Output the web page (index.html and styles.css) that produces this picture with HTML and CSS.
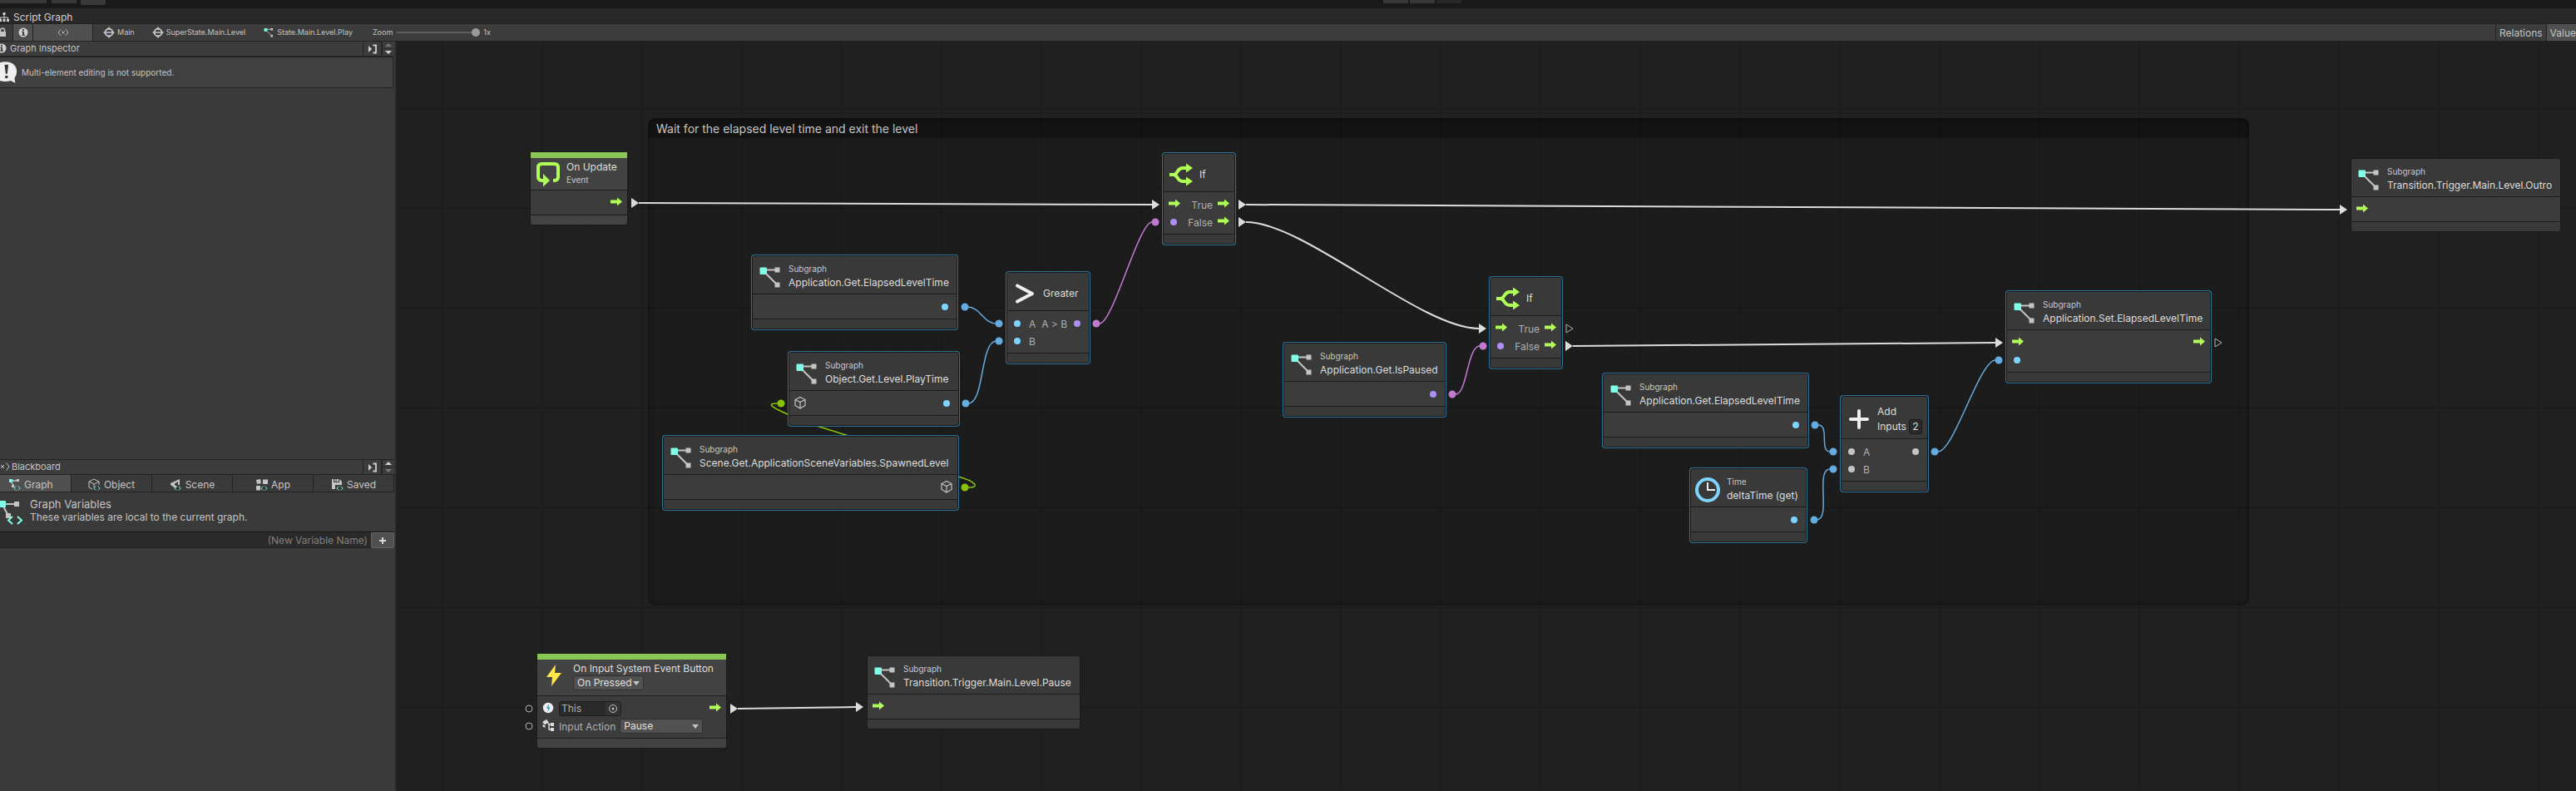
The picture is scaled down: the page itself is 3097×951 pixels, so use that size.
FILE: index.html
```html
<!DOCTYPE html>
<html lang="en">
<head>
<meta charset="utf-8">
<title>Script Graph</title>
<link rel="stylesheet" href="styles.css">
</head>
<body>
<svg class="sprite" aria-hidden="true">
  <symbol id="i-subgraph" viewBox="0 0 32 32">
    <path d="M8 7.500H24M8 9L24 25" stroke="#c4c4c4" stroke-width="2" fill="none"/>
    <rect x="21.500" y="4.500" width="6" height="6" fill="#c4c4c4"/><rect x="21.500" y="22.500" width="6" height="6" fill="#c4c4c4"/>
    <rect x="3.500" y="4.500" width="8.500" height="8.500" rx="1" fill="#80ffe6"/>
  </symbol>
  <symbol id="i-loop" viewBox="0 0 32 32">
    <path d="M11 24H8.500Q4 24 4 19.500V8.500Q4 4 8.500 4H23.500Q28 4 28 8.500V19.500Q28 24 23.500 24H22" stroke="#b0ff57" stroke-width="4" fill="none"/>
    <path d="M10 16L18 24L10 31.500Z" fill="#b0ff57"/>
  </symbol>
  <symbol id="i-branch" viewBox="0 0 32 32">
    <path d="M2 16H8M7 16C12 16 11 8 18 8H23M7 16C12 16 11 24 18 24H23" stroke="#b0ff57" stroke-width="4" fill="none"/>
    <path d="M22 2.500L30 8L22 13.500ZM22 18.500L30 24L22 29.500Z" fill="#b0ff57"/>
  </symbol>
  <symbol id="i-greater" viewBox="0 0 32 32"><path d="M7 6.500L25 16L7 25.500" stroke="#eee" stroke-width="4" fill="none" stroke-linejoin="round" stroke-linecap="round"/></symbol>
  <symbol id="i-plus" viewBox="0 0 32 32"><path d="M16 6V26M6 16H26" stroke="#eee" stroke-width="4" stroke-linecap="round"/></symbol>
  <symbol id="i-clock" viewBox="0 0 32 32"><circle cx="15" cy="16" r="13" stroke="#7fd4ff" stroke-width="4" fill="none"/><path d="M15 7V16H24" stroke="#eee" stroke-width="2" fill="none"/></symbol>
  <symbol id="i-bolt" viewBox="0 0 32 32"><path d="M17 2L6 17H13L12 28L24 12H16Z" fill="#ffe74c"/></symbol>
  <symbol id="i-arrow" viewBox="0 0 16 16"><path d="M1 4.500H9V1.500L15 6.500L9 11.500V8.500H1Z" fill="#b0ff57"/></symbol>
  <symbol id="i-dot" viewBox="0 0 16 16"><circle cx="7" cy="8" r="4" fill="currentColor"/></symbol>
  <symbol id="i-cube" viewBox="0 0 16 16"><path d="M8 .5L14 3.500V10.500L8 14L2 10.500V3.500ZM2 3.500L8 6.500L14 3.500M8 6.500V14" stroke="#c4c4c4" stroke-width="1.200" fill="none"/></symbol>
  <symbol id="i-self" viewBox="0 0 16 16"><circle cx="8" cy="7" r="6.200" fill="#f0f0f0"/><path d="M9 2L6 7.500H8L7.500 12L10.500 6.500H8.500Z" fill="#1a9ad6"/></symbol>
  <symbol id="i-action" viewBox="0 0 16 16"><path d="M1 3L6 0L8.500 3L4 6.500Z" fill="#ddd"/><path d="M7 3L9 6H13M9 6V12H13" stroke="#ddd" stroke-width="1.500" fill="none"/><path d="M11 4h4v4h-4zM11 10h4v4h-4z" fill="#ddd"/><path d="M2 6l3 2-1 2-3-2z" fill="#ddd"/></symbol>
  <symbol id="i-state" viewBox="0 0 16 16"><rect x="3.200" y="3.200" width="9.600" height="9.600" rx="4" fill="none" stroke="#c4c4c4" stroke-width="2"/><path d="M8 0L11 4H5ZM8 16L5 12H11ZM0 8L4 5V11ZM16 8L12 11V5ZM4.500 7.200H11.500V8.800H4.500Z" fill="#c4c4c4"/></symbol>
  <symbol id="i-info" viewBox="0 0 12 12"><circle cx="6" cy="6" r="5.500" fill="#d0d0d0"/><path d="M5 2h2v1.700H5zM4.300 4.800H7V8.500H8V9.700H4.200V8.500H5.200V6H4.300Z" fill="#3a3a3a"/></symbol>
  <symbol id="i-var" viewBox="0 0 16 12"><path d="M4.500 1.500L1 6L4.500 10.500M11.500 1.500L15 6L11.500 10.500M6 4L10 8M10 4L6 8" stroke="#c4c4c4" stroke-width="1" fill="none"/></symbol>
  <symbol id="i-lock" viewBox="0 0 12 12"><path d="M3.500 5.500V3.500Q3.500 1 6 1Q8.500 1 8.500 3.500V5.500" stroke="#c4c4c4" stroke-width="1.500" fill="none"/><rect x="2" y="5" width="8" height="6" fill="#c4c4c4"/></symbol>
  <symbol id="i-tree" viewBox="0 0 14 12"><path d="M7 3V8M2.500 9V6H11.500V9" stroke="#d2d2d2" fill="none"/><path d="M5.500 0h3v3h-3zM1 8h3v3H1zM5.500 8h3v3h-3zM10 8h3v3h-3z" fill="#d2d2d2"/></symbol>
  <symbol id="i-dock" viewBox="0 0 12 12"><path d="M1 2L5 6L1 10Z" fill="#d0d0d0"/><path d="M6.500 1.500H10V10.500H6.500" stroke="#d0d0d0" stroke-width="1.800" fill="none"/></symbol>
  <symbol id="i-brackets" viewBox="0 0 12 8"><path d="M4.500 .8L1 4L4.500 7.200M7.500 .8L11 4L7.500 7.200" stroke="#6eeed2" stroke-width="1.300" fill="none"/></symbol>
  <symbol id="i-tgraph" viewBox="0 0 16 16"><path d="M3 3H12M3 3L7 10" stroke="#c4c4c4" stroke-width="1.300"/><rect x="1" y="1" width="4" height="4" fill="#80ffe6"/><rect x="10" y="1" width="3" height="3" fill="#c4c4c4"/><rect x="4" y="8" width="3" height="3" fill="#c4c4c4"/><use href="#i-brackets" x="6" y="9" width="9" height="6"/></symbol>
  <symbol id="i-tobject" viewBox="0 0 16 16"><path d="M7 1L13 4V8M5 13L1 11V4L7 1M1 4L7 7L13 4M7 7V11" stroke="#c4c4c4" fill="none"/><use href="#i-brackets" x="6" y="9" width="9" height="6"/></symbol>
  <symbol id="i-tscene" viewBox="0 0 16 16"><path d="M12 1V8H10V4L6 6.500V8L9 10L7 12L1 8V6Z" fill="#c4c4c4"/><use href="#i-brackets" x="5" y="9" width="9" height="6"/></symbol>
  <symbol id="i-tapp" viewBox="0 0 16 16"><path d="M1 2L6 1L7 6L2 7ZM9 1.500h6v5.500H9zM1 9h5v5.500H1z" fill="#c4c4c4"/><use href="#i-brackets" x="6" y="9" width="9" height="6"/></symbol>
  <symbol id="i-tsaved" viewBox="0 0 16 16"><path d="M1 1H3V5H10V1L13 4V8H5V13H1ZM4 1H5.500V4H4ZM6.500 1H9V4H6.500Z" fill="#c4c4c4"/><use href="#i-brackets" x="6" y="9" width="9" height="6"/></symbol>
</svg>

<div class="window">
  <div class="app-bar">
    <span class="stub stub-wide"></span><span class="stub"></span><span class="stub stub-tall"></span>
    <span class="app-gap-a"></span>
    <span class="stub stub-play"></span><span class="stub stub-play"></span><span class="stub stub-play stub-off"></span>
    <span class="app-gap-b"></span>
  </div>
  <div class="tab-bar"><svg class="tree-icon"><use href="#i-tree"/></svg><span>Script Graph</span></div>

  <div class="toolbar">
    <button class="tool tool-lock" aria-label="Lock"><svg class="ic12"><use href="#i-lock"/></svg></button>
    <button class="tool tool-info on" aria-label="Inspector"><svg class="ic12"><use href="#i-info"/></svg></button>
    <button class="tool tool-var on" aria-label="Variables"><svg class="var-icon"><use href="#i-var"/></svg></button>
    <nav class="crumbs">
      <button class="crumb"><svg class="ic14"><use href="#i-state"/></svg>Main</button>
      <button class="crumb"><svg class="ic14"><use href="#i-state"/></svg>SuperState.Main.Level</button>
      <button class="crumb"><svg class="ic14"><use href="#i-subgraph"/></svg>State.Main.Level.Play</button>
    </nav>
    <label class="zoom-label" for="zoom">Zoom</label>
    <input class="zoom" id="zoom" type="range" min="0" max="100" value="100">
    <span class="zoom-value">1x</span>
    <button class="tool tool-text relations">Relations</button>
    <button class="tool tool-text on">Value</button>
  </div>

  <div class="main">
    <aside class="sidebar">
      <section class="panel">
        <header class="panel-head">
          <svg class="ic12 head-info"><use href="#i-info"/></svg><h2>Graph Inspector</h2>
          <button class="dock" aria-label="Dock"><svg class="ic12"><use href="#i-dock"/></svg></button>
          <div class="steps"><button class="step up dim" aria-label="Move up"></button><button class="step down" aria-label="Move down"></button></div>
        </header>
        <div class="help">
          <svg class="help-icon" viewBox="0 0 24 30"><path d="M7 1C17 1 22 7 22 14Q22 19 19 22.500L20 29L14 26Q11 27 7 27C-3 27 -9 21 -9 14C-9 7 -3 1 7 1Z" fill="#efefef"/><path d="M6 5H11L9.500 17H7.500Z" fill="#333"/><circle cx="8.500" cy="21" r="2" fill="#333"/></svg>
          <p>Multi-element editing is not supported.</p>
        </div>
      </section>
      <section class="panel blackboard">
        <header class="panel-head">
          <svg class="head-var" viewBox="4 0 12 12"><path d="M11.500 1.500L15 6L11.500 10.500M5 4L9 8M9 4L5 8" stroke="#c4c4c4" fill="none"/></svg><h2>Blackboard</h2>
          <button class="dock" aria-label="Dock"><svg class="ic12"><use href="#i-dock"/></svg></button>
          <div class="steps"><button class="step up" aria-label="Move up"></button><button class="step down dim" aria-label="Move down"></button></div>
        </header>
        <div class="tabs">
          <button class="tab on"><svg class="ic16"><use href="#i-tgraph"/></svg>Graph</button>
          <button class="tab"><svg class="ic16"><use href="#i-tobject"/></svg>Object</button>
          <button class="tab"><svg class="ic16"><use href="#i-tscene"/></svg>Scene</button>
          <button class="tab"><svg class="ic16"><use href="#i-tapp"/></svg>App</button>
          <button class="tab"><svg class="ic16"><use href="#i-tsaved"/></svg>Saved</button>
        </div>
        <div class="about">
          <svg class="about-icon" viewBox="0 0 30 30"><path d="M3 5H20M3 6L10 19" stroke="#c4c4c4" stroke-width="2"/><rect x="-1" y="1" width="8" height="8" rx="1" fill="#80ffe6"/><rect x="17" y="2" width="6" height="6" fill="#c4c4c4"/><rect x="7" y="16" width="6" height="6" fill="#c4c4c4"/><path d="M15 20L10 24.500L15 29M21 20L26 24.500L21 29" stroke="#80ffe6" stroke-width="2" fill="none"/></svg>
          <div><h3>Graph Variables</h3><p>These variables are local to the current graph.</p></div>
        </div>
        <div class="new-var">
          <input type="text" placeholder="(New Variable Name)" aria-label="New variable name">
          <button aria-label="Add variable"><svg viewBox="0 0 10 10"><path d="M5 1V9M1 5H9" stroke="#d8d8d8" stroke-width="2"/></svg></button>
        </div>
      </section>
    </aside>

    <main class="canvas">
      <div class="group"><div class="group-title">Wait for the elapsed level time and exit the level</div></div>

      <svg class="wires" aria-hidden="true">
        <defs>
          <path id="tri" d="M0 -6L9 0L0 6Z"/>
        </defs>
        <g transform="translate(-476 -50)">
          <g class="flow">
            <path d="M768 244L1385 246"/><path d="M1498 246L2813 252"/><path d="M1498 267C1568 267 1708 395 1778 395"/>
            <path d="M1891 416L2399 412"/><path d="M887 852L1029 850"/>
          </g>
          <g class="value bool"><path d="M1318 389H1322C1338 389 1369 267 1385 267H1389"/><path d="M1746 474H1750C1764 474 1764 416 1779 416H1783"/></g>
          <g class="value num">
            <path d="M1160 369H1163C1179 369 1182 389 1198 389H1201"/><path d="M1161 485H1164C1184 485 1178 410 1198 410H1201"/>
            <path d="M2182 511H2186C2200 511 2187 543 2200 543H2204"/><path d="M2181 625H2184C2202 625 2182 564 2200 564H2204"/>
            <path d="M2326 543H2330C2349 543 2380 433 2399 433H2403"/>
          </g>
          <path class="value obj" d="M1160 586H1166C1177 586 1174 579 1152 573L1017 523L985 513L947 498C926 489 922 485 934 485H939"/>
          <g class="tips">
            <use href="#tri" x="759" y="244"/><use href="#tri" x="1385" y="246"/><use href="#tri" x="1489" y="246"/><use href="#tri" x="2813" y="252"/>
            <use href="#tri" x="1489" y="267"/><use href="#tri" x="1778" y="395"/><use href="#tri" x="1882" y="416"/><use href="#tri" x="2399" y="412"/>
            <use href="#tri" x="878" y="852"/><use href="#tri" x="1029" y="850"/>
          </g>
          <g class="open"><path d="M1883 390L1891 395L1883 400Z"/><path d="M2663 407L2671 412L2663 417Z"/><circle cx="636" cy="852" r="4"/><circle cx="636" cy="873" r="4"/></g>
          <g class="dots-bool"><circle cx="1318" cy="389" r="4.500"/><circle cx="1389" cy="267" r="4.500"/><circle cx="1746" cy="474" r="4.500"/><circle cx="1783" cy="416" r="4.500"/></g>
          <g class="dots-num"><circle cx="1160" cy="369" r="4.500"/><circle cx="1201" cy="389" r="4.500"/><circle cx="1161" cy="485" r="4.500"/><circle cx="1201" cy="410" r="4.500"/><circle cx="2182" cy="511" r="4.500"/><circle cx="2204" cy="543" r="4.500"/><circle cx="2181" cy="625" r="4.500"/><circle cx="2204" cy="564" r="4.500"/><circle cx="2326" cy="543" r="4.500"/><circle cx="2403" cy="433" r="4.500"/></g>
          <g class="dots-obj"><circle cx="1160" cy="586" r="4.500"/><circle cx="939" cy="485" r="4.500"/></g>
        </g>
      </svg>

      <article class="node event n-update">
        <header><svg class="ic32"><use href="#i-loop"/></svg><div class="titles"><h4>On Update</h4><small>Event</small></div></header>
        <div class="ports"><div class="port"><svg class="ic16 out"><use href="#i-arrow"/></svg></div></div><footer></footer>
      </article>

      <article class="node selected n-elapsed-a">
        <header><svg class="ic32"><use href="#i-subgraph"/></svg><div class="titles"><small>Subgraph</small><h4>Application.Get.ElapsedLevelTime</h4></div></header>
        <div class="ports"><div class="port"><svg class="ic16 out c-num"><use href="#i-dot"/></svg></div></div><footer></footer>
      </article>

      <article class="node selected n-playtime">
        <header><svg class="ic32"><use href="#i-subgraph"/></svg><div class="titles"><small>Subgraph</small><h4>Object.Get.Level.PlayTime</h4></div></header>
        <div class="ports"><div class="port"><svg class="ic16"><use href="#i-cube"/></svg><svg class="ic16 out c-num"><use href="#i-dot"/></svg></div></div><footer></footer>
      </article>

      <article class="node selected n-spawned">
        <header><svg class="ic32"><use href="#i-subgraph"/></svg><div class="titles"><small>Subgraph</small><h4>Scene.Get.ApplicationSceneVariables.SpawnedLevel</h4></div></header>
        <div class="ports"><div class="port"><svg class="ic16 out"><use href="#i-cube"/></svg></div></div><footer></footer>
      </article>

      <article class="node selected n-greater">
        <header><svg class="ic32"><use href="#i-greater"/></svg><div class="titles"><h4>Greater</h4></div></header>
        <div class="ports">
          <div class="port"><svg class="ic16 c-num"><use href="#i-dot"/></svg><span class="name">A</span><span class="name out">A &gt; B</span><svg class="ic16 c-bool"><use href="#i-dot"/></svg></div>
          <div class="port"><svg class="ic16 c-num"><use href="#i-dot"/></svg><span class="name">B</span></div>
        </div><footer></footer>
      </article>

      <article class="node selected n-if-a">
        <header><svg class="ic32"><use href="#i-branch"/></svg><div class="titles"><h4>If</h4></div></header>
        <div class="ports">
          <div class="port"><svg class="ic16"><use href="#i-arrow"/></svg><span class="name out">True</span><svg class="ic16"><use href="#i-arrow"/></svg></div>
          <div class="port"><svg class="ic16 c-bool"><use href="#i-dot"/></svg><span class="name out">False</span><svg class="ic16"><use href="#i-arrow"/></svg></div>
        </div><footer></footer>
      </article>

      <article class="node selected n-paused">
        <header><svg class="ic32"><use href="#i-subgraph"/></svg><div class="titles"><small>Subgraph</small><h4>Application.Get.IsPaused</h4></div></header>
        <div class="ports"><div class="port"><svg class="ic16 out c-bool"><use href="#i-dot"/></svg></div></div><footer></footer>
      </article>

      <article class="node selected n-if-b">
        <header><svg class="ic32"><use href="#i-branch"/></svg><div class="titles"><h4>If</h4></div></header>
        <div class="ports">
          <div class="port"><svg class="ic16"><use href="#i-arrow"/></svg><span class="name out">True</span><svg class="ic16"><use href="#i-arrow"/></svg></div>
          <div class="port"><svg class="ic16 c-bool"><use href="#i-dot"/></svg><span class="name out">False</span><svg class="ic16"><use href="#i-arrow"/></svg></div>
        </div><footer></footer>
      </article>

      <article class="node selected n-elapsed-b">
        <header><svg class="ic32"><use href="#i-subgraph"/></svg><div class="titles"><small>Subgraph</small><h4>Application.Get.ElapsedLevelTime</h4></div></header>
        <div class="ports"><div class="port"><svg class="ic16 out c-num"><use href="#i-dot"/></svg></div></div><footer></footer>
      </article>

      <article class="node selected n-delta">
        <header><svg class="ic32"><use href="#i-clock"/></svg><div class="titles"><small>Time</small><h4>deltaTime (get)</h4></div></header>
        <div class="ports"><div class="port"><svg class="ic16 out c-num"><use href="#i-dot"/></svg></div></div><footer></footer>
      </article>

      <article class="node selected tall n-add">
        <header><svg class="ic32"><use href="#i-plus"/></svg><div class="titles"><h4>Add</h4><div class="inputs"><label for="add-inputs">Inputs</label><input id="add-inputs" type="text" value="2"></div></div></header>
        <div class="ports">
          <div class="port"><svg class="ic16 c-any"><use href="#i-dot"/></svg><span class="name">A</span><svg class="ic16 out c-any"><use href="#i-dot"/></svg></div>
          <div class="port"><svg class="ic16 c-any"><use href="#i-dot"/></svg><span class="name">B</span></div>
        </div><footer></footer>
      </article>

      <article class="node selected n-set">
        <header><svg class="ic32"><use href="#i-subgraph"/></svg><div class="titles"><small>Subgraph</small><h4>Application.Set.ElapsedLevelTime</h4></div></header>
        <div class="ports">
          <div class="port"><svg class="ic16"><use href="#i-arrow"/></svg><svg class="ic16 out"><use href="#i-arrow"/></svg></div>
          <div class="port"><svg class="ic16 c-num"><use href="#i-dot"/></svg></div>
        </div><footer></footer>
      </article>

      <article class="node n-outro">
        <header><svg class="ic32"><use href="#i-subgraph"/></svg><div class="titles"><small>Subgraph</small><h4>Transition.Trigger.Main.Level.Outro</h4></div></header>
        <div class="ports"><div class="port"><svg class="ic16"><use href="#i-arrow"/></svg></div></div><footer></footer>
      </article>

      <article class="node event tall n-input">
        <header><svg class="ic32"><use href="#i-bolt"/></svg><div class="titles"><h4>On Input System Event Button</h4>
          <span class="picker picker-small"><select aria-label="Trigger"><option>On Pressed</option></select></span></div></header>
        <div class="ports">
          <div class="port"><svg class="ic16"><use href="#i-self"/></svg>
            <span class="object-field"><input type="text" value="This" aria-label="Target"><button aria-label="Pick object"><svg viewBox="0 0 12 12"><circle cx="6" cy="6" r="4.500" fill="none" stroke="#c4c4c4"/><circle cx="6" cy="6" r="1.500" fill="#c4c4c4"/></svg></button></span>
            <svg class="ic16 out"><use href="#i-arrow"/></svg></div>
          <div class="port"><svg class="ic16"><use href="#i-action"/></svg><label class="name" for="action">Input Action</label>
            <span class="picker picker-wide"><select id="action"><option>Pause</option></select></span></div>
        </div><footer></footer>
      </article>

      <article class="node n-pause">
        <header><svg class="ic32"><use href="#i-subgraph"/></svg><div class="titles"><small>Subgraph</small><h4>Transition.Trigger.Main.Level.Pause</h4></div></header>
        <div class="ports"><div class="port"><svg class="ic16"><use href="#i-arrow"/></svg></div></div><footer></footer>
      </article>
    </main>
  </div>
</div>
</body>
</html>
```

FILE: styles.css
```css
* { box-sizing: border-box; }
body, h2, h3, h4, p { margin: 0; }
body { background: #202020; color: #c4c4c4; font: 12px/16px Inter, "Liberation Sans", sans-serif; overflow: hidden; }
h2, h3, h4 { font-weight: 400; }
button, input, select { font: inherit; color: inherit; border: 0; margin: 0; padding: 0; background: none; border-radius: 0; }
svg { display: block; flex: none; }
.sprite { position: absolute; width: 0; height: 0; }
.ic12 { width: 12px; height: 12px; }
.ic14 { width: 14px; height: 14px; }
.ic16 { width: 16px; height: 16px; }
.ic32 { width: 32px; height: 32px; }

.window { display: flex; flex-direction: column; height: 100vh; }

.app-bar { display: flex; align-items: flex-start; height: 10px; background: #191919; }
.stub { width: 30px; height: 4px; margin-right: 5px; background: #383838; }
.stub-wide { width: 56px; margin-right: 6px; }
.stub-tall { height: 6px; border-radius: 0 0 2px 2px; }
.stub-play { margin-right: 2px; }
.stub-off { background: #282828; }
.app-gap-a { flex: 1532; }
.app-gap-b { flex: 1339; }

.tab-bar { display: flex; align-items: center; gap: 4px; height: 19px; padding-top: 3px; background: #282828; border-bottom: 1px solid #232323; color: #d2d2d2; }
.tree-icon { width: 14px; height: 12px; margin-left: -2px; }

.toolbar { display: flex; align-items: stretch; height: 21px; background: #3c3c3c; border-bottom: 1px solid #232323; font-size: 9px; }
.tool { display: flex; align-items: center; justify-content: center; border-right: 1px solid #232323; }
.tool.on { background: #505050; }
.tool-lock { width: 16px; padding-right: 9px; }
.tool-info { width: 24px; }
.tool-var { width: 72px; }
.var-icon { width: 16px; height: 10px; }
.tool-text { font-size: 12px; padding: 2px 4px 0; border-right: 0; border-left: 1px solid #232323; }
.relations { margin-left: auto; }
.tool-text.on { padding-right: 0; }
.crumbs { display: flex; gap: 21px; padding-left: 12px; }
.crumb { display: flex; align-items: center; gap: 3px; }
.zoom-label { align-self: center; margin-left: 24px; }
.zoom { align-self: center; appearance: none; width: 100px; height: 12px; margin: 0 4px 0 5px; }
.zoom::-webkit-slider-runnable-track { height: 2px; background: #5e5e5e; }
.zoom::-webkit-slider-thumb { appearance: none; width: 10px; height: 10px; margin-top: -4px; border-radius: 50%; background: #999; }
.zoom-value { align-self: center; }

.main { display: flex; flex: 1; min-height: 0; }
.sidebar { display: grid; grid-template-rows: 502fr 399fr; width: 476px; background: #3a3a3a; border-right: 2px solid #333; }
.panel-head { display: flex; align-items: stretch; height: 18px; background: #3c3c3c; border-bottom: 1px solid #232323; }
.panel-head h2 { flex: 1; font-size: 11px; }
.blackboard { border-top: 1px solid #232323; }
.head-info { margin: 2px 4px 0 -4px; }
.head-var { width: 12px; height: 12px; margin: 2px 2px 0 0; }
.dock { display: flex; align-items: center; justify-content: center; width: 22px; border-left: 1px solid #232323; }
.steps { display: grid; width: 16px; border-left: 2px solid #262626; }
.step { display: grid; place-items: center; }
.step::before { content: ""; border: 4px solid transparent; }
.up::before { border-top: 0; border-bottom-color: #d0d0d0; }
.down::before { border-bottom: 0; border-top-color: #d0d0d0; }
.down { border-top: 1px solid #2c2c2c; }
.dim::before { opacity: .4; }
.help { display: flex; align-items: center; gap: 4px; height: 38px; margin-right: 1px; background: #404040; border: 1px solid #232323; border-left: 0; border-radius: 0 3px 3px 0; font-size: 10px; }
.help-icon { width: 22px; height: 28px; }

.tabs { display: grid; grid-template-columns: 86px repeat(4, 1fr); height: 21px; border-bottom: 1px solid #232323; }
.tab { display: flex; align-items: center; justify-content: center; gap: 3px; padding-top: 3px; border-right: 1px solid #232323; }
.tab.on { background: #505050; justify-content: flex-start; padding-left: 10px; }
.about { display: flex; gap: 6px; height: 48px; padding-top: 7px; border-bottom: 1px solid #191919; }
.about-icon { width: 30px; height: 30px; margin-top: 2px; }
.about h3 { font-size: 13px; line-height: 15px; }
.new-var { display: flex; height: 19px; }
.new-var input { flex: 1; min-width: 0; background: #2a2a2a; padding: 2px 4px 0 0; text-align: right; border-bottom: 1px solid #222; }
.new-var input::placeholder { color: #808080; opacity: 1; }
.new-var button { display: grid; place-items: center; width: 28px; background: #505050; border: 1px solid #666; border-radius: 2px; }
.new-var svg { width: 10px; height: 10px; }

.canvas {
  position: relative; flex: 1; min-width: 0; overflow: hidden; background-color: #202020;
  background-image:
    linear-gradient(90deg, #191919 1px, transparent 1px), linear-gradient(#191919 1px, transparent 1px),
    linear-gradient(90deg, #1f1f1f 1px, transparent 1px), linear-gradient(#1f1f1f 1px, transparent 1px);
  background-size: 120px 120px, 120px 120px, 12px 12px, 12px 12px;
  background-position: 56px 80px;
}
.group { position: absolute; left: 303px; top: 92px; width: 1925px; height: 586px; border-radius: 9px; background: rgba(0, 0, 0, .12); box-shadow: inset 0 0 6px rgba(0, 0, 0, .5); overflow: hidden; }
.group-title { height: 24px; padding: 0 10px; background: rgba(0, 0, 0, .3); border-bottom: 1px solid #151515; font-size: 14px; line-height: 26px; }
.wires { position: absolute; inset: 0; width: 100%; height: 100%; }
.wires path { fill: none; }
.flow { stroke: #dcdcdc; stroke-width: 2; }
.value { stroke-width: 1.5; }
.bool { stroke: #c07ad0; }
.num { stroke: #64abdf; }
.obj { stroke: #86c205; }
.wires #tri { fill: #dcdcdc; }
.open { fill: none; stroke: #b4b4b4; }
.dots-bool { fill: #c07ad0; }
.dots-num { fill: #64abdf; }
.dots-obj { fill: #86c205; }

.node { position: absolute; background: #393939; border: 1px solid #1a1a1a; border-radius: 3px; color: #dedede; }
.selected { box-shadow: 0 0 0 1px #2d7196; margin: 1px; }
.node header { display: flex; align-items: center; gap: 6px; height: 45px; padding: 4px 0 0 5px; }
.tall header { height: 50px; }
.titles { flex: 1; white-space: nowrap; }
.titles small { display: block; font-size: 10px; line-height: 15px; color: #c8c8c8; }
.titles h4 { font-size: 12px; line-height: 18px; }
.event { background: #434343; }
.node.event header { border-top: 7px solid #8ac653; padding: 0 0 1px 5px; }
.node.event.tall header { padding-bottom: 4px; }
.event h4 { line-height: 16px; }
.ports { padding: 4px 5px; background: #3c3c3c; border: solid #1c1c1c; border-width: 1px 0; color: #b0b0b0; }
.port { display: flex; align-items: center; gap: 5px; height: 21px; white-space: nowrap; }
.name { padding-top: 2px; }
.node footer { height: 11px; }
.out { margin-left: auto; }
.c-num { color: #7fd4ff; }
.c-bool { color: #b08ff5; }
.c-any { color: #c4c4c4; }
.inputs { display: flex; align-items: center; gap: 3px; line-height: 18px; }
.inputs input { width: 16px; height: 18px; text-align: center; background: #2a2a2a; border: 1px solid #1a1a1a; border-radius: 3px; }
.picker { position: relative; display: block; height: 18px; color: #e0e0e0; }
.picker select { appearance: none; display: block; width: 100%; height: 100%; padding: 0 4px; background: #515151; border: 1px solid #303030; border-radius: 3px; }
.picker::after { content: ""; position: absolute; right: 5px; top: 7px; border: 4px solid transparent; border-bottom: 0; border-top: 5px solid #c4c4c4; pointer-events: none; }
.picker-small { width: 85px; }
.picker-wide { width: 100px; }
.object-field { display: flex; width: 75px; height: 18px; background: #2a2a2a; border: 1px solid #1c1c1c; border-radius: 3px; }
.object-field input { flex: 1; min-width: 0; padding-left: 2px; }
.object-field button { display: grid; place-items: center; width: 18px; background: #333; }
.object-field svg { width: 12px; height: 12px; }

.n-update { left: 161px; top: 132px; width: 118px; }
.n-elapsed-a { left: 427px; top: 256px; width: 247px; }
.n-playtime { left: 471px; top: 372px; width: 205px; }
.n-spawned { left: 320px; top: 473px; width: 355px; }
.n-greater { left: 733px; top: 276px; width: 100px; }
.n-if-a { left: 921px; top: 133px; width: 87px; }
.n-paused { left: 1066px; top: 361px; width: 195px; }
.n-if-b { left: 1314px; top: 282px; width: 87px; }
.n-elapsed-b { left: 1450px; top: 398px; width: 247px; }
.n-delta { left: 1555px; top: 512px; width: 140px; }
.n-add { left: 1736px; top: 425px; width: 105px; }
.n-set { left: 1935px; top: 299px; width: 246px; }
.n-outro { left: 2350px; top: 140px; width: 253px; }
.n-input { left: 169px; top: 735px; width: 229px; }
.n-pause { left: 566px; top: 738px; width: 257px; }
```
